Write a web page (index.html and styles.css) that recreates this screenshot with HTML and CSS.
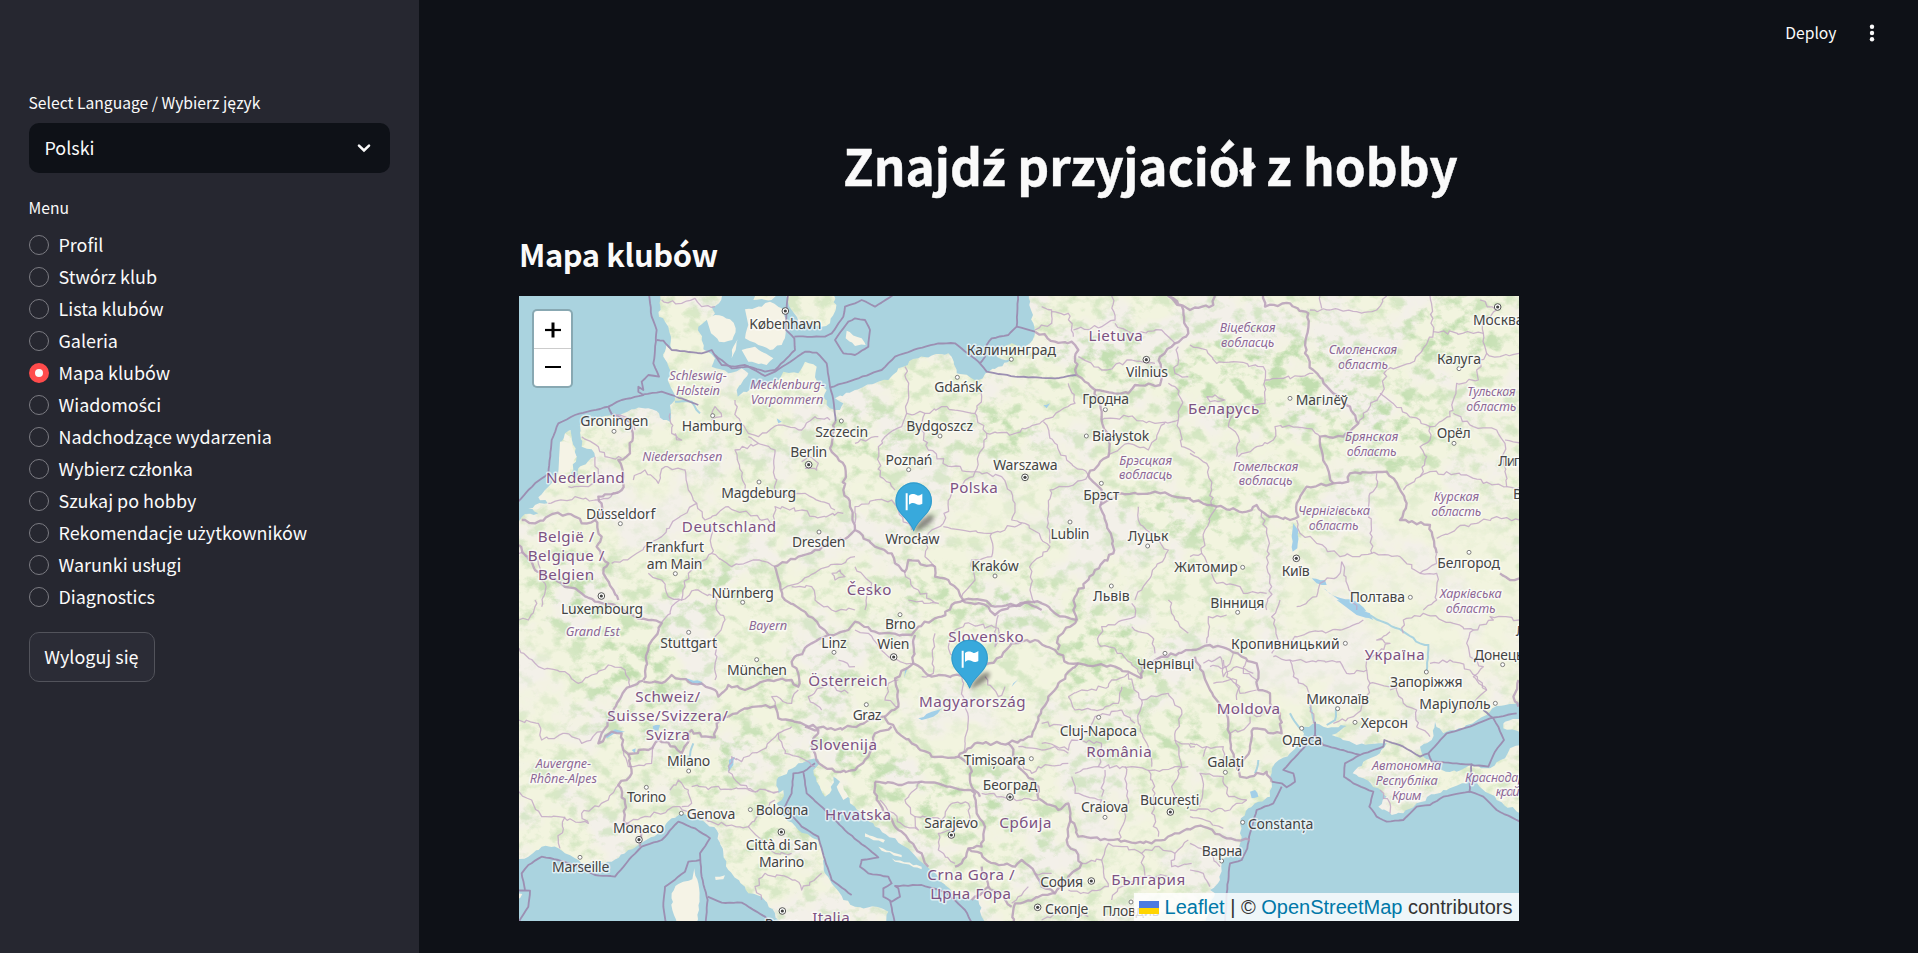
FILE: index.html
```html
<!DOCTYPE html>
<html lang="pl">
<head>
<meta charset="utf-8">
<title>Znajdź przyjaciół z hobby</title>
<link rel="stylesheet" href="styles.css">
</head>
<body>
<div class="app">
  <aside class="sidebar">
    <div class="field-label">Select Language / Wybierz język</div>
    <div class="select"><span>Polski</span>
      <svg width="14" height="10" viewBox="0 0 14 10"><path d="M2 2.6 L7 7.4 L12 2.6" fill="none" stroke="#fafafa" stroke-width="2.6" stroke-linecap="round"/></svg>
    </div>
    <div class="field-label menu-label">Menu</div>
    <div class="radios">
      <label class="radio"><i></i><span>Profil</span></label>
      <label class="radio"><i></i><span>Stwórz klub</span></label>
      <label class="radio"><i></i><span>Lista klubów</span></label>
      <label class="radio"><i></i><span>Galeria</span></label>
      <label class="radio on"><i></i><span>Mapa klubów</span></label>
      <label class="radio"><i></i><span>Wiadomo<b class="ext">ś</b>ci</span></label>
      <label class="radio"><i></i><span>Nadchodzące wydarzenia</span></label>
      <label class="radio"><i></i><span>Wybierz członka</span></label>
      <label class="radio"><i></i><span>Szukaj po hobby</span></label>
      <label class="radio"><i></i><span>Rekomendacje u<b class="ext">ż</b>ytkowników</span></label>
      <label class="radio"><i></i><span>Warunki usługi</span></label>
      <label class="radio"><i></i><span>Diagnostics</span></label>
    </div>
    <button class="logout">Wyloguj się</button>
  </aside>
  <main class="main">
    <header class="toolbar">
      <span>Deploy</span>
      <svg width="6" height="18" viewBox="0 0 6 18" fill="#fafafa"><circle cx="3" cy="2.8" r="2.2"/><circle cx="3" cy="9" r="2.2"/><circle cx="3" cy="15.2" r="2.2"/></svg>
    </header>
    <h1>Znajd<b class="ext">ź</b> przyjaciół z hobby</h1>
    <h2>Mapa klubów</h2>
    <div class="map">
      <svg id="tiles" width="1000" height="625" viewBox="0 0 3000 1875">
        <defs>
          <filter id="wood" x="0" y="0" width="100%" height="100%" color-interpolation-filters="sRGB">
            <feTurbulence type="fractalNoise" baseFrequency="0.02 0.025" numOctaves="6" seed="7"/>
            <feColorMatrix values="0 0 0 0 .76  0 0 0 0 .87  0 0 0 0 .69  4.5 0 0 0 -2.15"/>
          </filter>
          <filter id="field" x="0" y="0" width="100%" height="100%" color-interpolation-filters="sRGB">
            <feTurbulence type="fractalNoise" baseFrequency="0.005" numOctaves="5" seed="21"/>
            <feColorMatrix values="0 0 0 0 .95  0 0 0 0 .955  0 0 0 0 .875  0 6 0 0 -2.2"/>
          </filter>
          <filter id="soft" x="-50%" y="-50%" width="200%" height="200%"><feGaussianBlur stdDeviation="45"/></filter>
          <filter id="shade" x="-50%" y="-50%" width="200%" height="200%"><feGaussianBlur stdDeviation="7"/></filter>
          <mask id="woodMask" maskUnits="userSpaceOnUse" x="0" y="0" width="3000" height="1875"><rect width="3000" height="1875" fill="#888"/><g id="dense" fill="#fff" filter="url(#soft)"></g><g id="sparse" fill="#2c2c2c" filter="url(#soft)"></g></mask>
        </defs>
        <rect width="3000" height="1875" fill="#f3f0e9"/>
        <rect width="3000" height="1875" filter="url(#field)"/>
        <g mask="url(#woodMask)"><rect width="3000" height="1875" filter="url(#wood)"/></g>
        <g id="water"></g><g id="lines"></g><g id="labels"></g>
        <g id="pins"></g>
      </svg>
      <div class="zoom">
        <span><svg width="16" height="16" viewBox="0 0 16 16"><path d="M0 8H16" stroke="#000" stroke-width="2.2"/><path d="M8 0.5V15.5" stroke="#000" stroke-width="3"/></svg></span>
        <span><svg width="16" height="16" viewBox="0 0 16 16"><path d="M0 7H16" stroke="#000" stroke-width="2"/></svg></span>
      </div>
      <div class="attribution">
        <svg width="20" height="13" viewBox="0 0 20 13"><path fill="#4c7be1" d="M0 0h20v7H0z"/><path fill="#ffd500" d="M0 7h20v6H0z"/></svg><span><a>Leaflet</a> | © <a>OpenStreetMap</a> contributors</span>
      </div>
    </div>
  </main>
</div>
<script src="map.js"></script>
</body>
</html>
```
FILE: styles.css
```css
* { box-sizing: border-box; }
body {
  margin: 0;
  background: #0e1117;
  color: #fafafa;
  font-family: "Noto Sans CJK SC", "Noto Sans", sans-serif;
  font-size: 17.93px;
}
.ext { font-family: "Noto Sans", sans-serif; font-weight: inherit; font-size: .98em; line-height: 1; }
.app { display: flex; height: 953px; overflow: hidden; }
.sidebar {
  width: 419px;
  flex: none;
  background: #262730;
  padding: 88px 29px 0;
}
.field-label { font-size: 15.68px; line-height: 30px; height: 30px; text-indent: -.5px; }
.select {
  margin-top: 5px;
  height: 50px;
  border-radius: 10px;
  background: #0e1117;
  display: flex;
  align-items: center;
  justify-content: space-between;
  padding: 0 19px 0 15.5px;
}
.select span { line-height: 30px; padding-bottom: 2px; }
.menu-label { margin-top: 20px; }
.radios { margin-top: 6px; display: flex; flex-direction: column; }
.radio { display: flex; align-items: center; gap: 9.5px; height: 32px; white-space: nowrap; }
.radio span { line-height: 28px; padding-bottom: 2px; }
.radio i {
  width: 20px;
  height: 20px;
  border-radius: 50%;
  border: 1px solid #7b7b82;
  flex: none;
}
.radio.on i { border: 6.5px solid #ff4b4b; background: #fafafa; }
.logout {
  display: block;
  margin-top: 19px;
  width: 126px;
  height: 50px;
  padding: 0 1px 2px 0;
  border: 1px solid #52535b;
  border-radius: 10px;
  background: #2b2c36;
  color: inherit;
  font: inherit;
}
.main { flex: 1; padding-left: 100px; }
.toolbar {
  height: 66px;
  display: flex;
  justify-content: flex-end;
  align-items: center;
  gap: 32px;
  padding-right: 43.5px;
  font-size: 15.7px;
}
.toolbar span { line-height: 24px; }
h1 {
  margin: 61px 136px 0 0;
  height: 74px;
  line-height: 74px;
  font-size: 49.6px;
  font-weight: 700;
  text-align: center;
  -webkit-text-stroke: .4px #fafafa;
}
h2 {
  margin: 28px 0 0;
  height: 50px;
  line-height: 50px;
  font-size: 30.9px;
  font-weight: 700;
  letter-spacing: -.4px;
}
.map { position: relative; width: 1000px; height: 625px; margin-top: 17px; overflow: hidden; }
.map svg { display: block; }
.zoom {
  position: absolute;
  left: 13px;
  top: 13px;
  width: 41px;
  border: 2px solid rgba(0, 0, 0, .2);
  border-radius: 5px;
  background: #fff;
  background-clip: padding-box;
}
.zoom span { display: flex; height: 37px; align-items: center; justify-content: center; }
.zoom span:first-child { height: 38px; border-bottom: 1px solid #ccc; }
.attribution {
  position: absolute;
  right: 0;
  bottom: 0;
  height: 28px;
  padding: 0 6.5px 0 5.5px;
  display: flex;
  align-items: center;
  gap: 5.5px;
  background: rgba(255, 255, 255, .8);
  color: #333;
  font: 20px/28px "Liberation Sans", Arial, sans-serif;
  white-space: nowrap;
}
.attribution a { color: #0078a8; }
#labels text {
  font-family: "Noto Sans", sans-serif;
  text-anchor: middle;
  paint-order: stroke;
  stroke: rgba(255, 255, 255, .65);
  stroke-width: 9px;
  stroke-linejoin: round;
}
#labels .city { font-size: 42px; fill: #444; }
#labels .country { font-size: 45.5px; fill: #7d5283; }
#labels .region { font-size: 38.5px; font-style: italic; fill: #8d6896; }
```
FILE: map.js
```javascript
// Sheet origins in map units (3 units per pixel).
const S = { a: [-12, -18], b: [1008, -18], c: [2013, -18], d: [-12, 912], e: [1008, 912], f: [2013, 912] };
const NS = 'http://www.w3.org/2000/svg';
const $ = id => document.getElementById(id);
let seed = 11;
const rnd = () => ((seed = (seed * 16807) % 2147483647) / 2147483647) - 0.5;
function el(parent, tag, attrs, text) {
  const n = document.createElementNS(NS, tag);
  for (const k in attrs) n.setAttribute(k, attrs[k]);
  if (text) n.textContent = text;
  parent.appendChild(n);
  return n;
}
// "a 1,2 3,4 b 5,6": points, with sheet letters switching the origin.
function parse(s) {
  let o = S.a; const out = [];
  for (const t of s.trim().split(/\s+/)) {
    if (S[t]) { o = S[t]; continue; }
    const [x, y] = t.split(',').map(Number);
    out.push([x + o[0], y + o[1]]);
  }
  return out;
}
function rough(p, k) {
  if (!k) return p;
  const out = [p[0]];
  for (let i = 1; i < p.length; i++) {
    const [x0, y0] = p[i - 1], [x1, y1] = p[i];
    const L = Math.hypot(x1 - x0, y1 - y0), n = Math.max(1, Math.round(L / 13));
    for (let j = 1; j < n; j++) out.push([x0 + (x1 - x0) * j / n + rnd() * k, y0 + (y1 - y0) * j / n + rnd() * k]);
    out.push(p[i]);
  }
  return out;
}
const path = (p, close) => 'M' + p.map(q => q[0].toFixed(1) + ' ' + q[1].toFixed(1)).join('L') + (close ? 'Z' : '');

const dense = [[350,1150,150,180],[800,1400,330,110],[850,1150,200,60],[1200,900,160,50],[1450,920,260,60],[1780,1100,160,150],[1950,1330,260,60],[2100,650,260,90],[2250,250,330,160],[2600,400,180,150],[1300,1500,220,130],[780,1580,90,90],[1650,1620,120,130],[1450,400,160,80],[2800,120,160,120],[550,880,170,70],[1050,420,140,90],[1750,200,220,90],[2060,640,100,80],[170,880,120,150]];
const sparse = [[2750,1000,330,230],[2300,1150,260,120],[1350,1300,130,90],[760,1450,110,40],[350,640,250,110],[2480,900,180,130],[1750,1620,160,80],[2050,1620,160,60],[640,200,150,90],[60,1150,60,150],[2750,720,220,130],[1400,650,200,60]];
dense.forEach(e => el($('dense'), 'ellipse', { cx: e[0], cy: e[1], rx: e[2], ry: e[3] }));
sparse.forEach(e => el($('sparse'), 'ellipse', { cx: e[0], cy: e[1], rx: e[2], ry: e[3] }));

const sea = [
  'a 0,0 430,0 437,60 432,80 450,95 460,110 468,140 470,180 455,165 445,200 465,240 458,270 480,330 465,345 465,395 445,390 432,370 400,355 350,358 300,380 270,378 200,398 195,405 150,430 135,480 130,550 100,590 70,622 98,640 60,645 40,655 70,670 30,672 15,690 0,700',
  'a 195,405 200,470 230,478 240,500 218,515 190,535 185,568 168,550 185,500 170,440 165,410',
  'a 620,0 612,40 590,50 600,70 575,90 550,110 560,150 565,178 600,205 590,230 640,250 680,235 700,250 665,300 668,320 720,292 790,270 805,245 850,250 870,215 905,230 900,262 935,300 925,325 945,355 975,360 985,340 960,325 1020,300 b 60,280 100,270 130,235 190,205 280,190 290,200 305,250 345,262 370,270 400,245 430,230 470,208 440,208 425,200 430,180 470,160 500,175 525,160 540,125 535,100 528,60 518,0 b -70,0 a 955,0 962,60 945,100 920,110 850,95 830,60 815,20 800,0 770,30 715,30 720,0',
  'd 0,780 40,770 80,740 130,745 150,760 190,780 200,790 290,785 340,750 370,735 430,700 470,655 500,640 560,660 605,690 625,760 640,810 690,860 700,880 740,890 780,940 800,985 0,985',
  'd 910,478 880,480 850,490 820,510 785,540 790,580 805,570 800,600 785,610 800,640 850,690 910,720 925,760 930,820 985,900 1020,920 e 80,925 100,935 95,985 390,985 370,900 300,890 250,830 150,740 60,680 0,620 d 1005,610 975,545 955,530 950,570 930,590 905,545 895,510 912,492',
  'f 1000,308 920,318 890,345 820,385 760,400 735,365 725,420 690,440 700,470 720,480 740,510 800,515 840,495 900,505 945,475 960,445 1000,430 1000,400 940,385 945,365 1000,355',
  'f 330,385 375,370 400,380 470,378 425,405 500,435 590,430 570,460 520,485 488,520 520,535 565,565 590,590 565,620 605,645 640,640 680,610 760,570 830,550 835,520 845,520 880,570 920,600 1000,645 1000,985 40,985 75,880 60,870 90,840 95,780 145,750 155,710 150,670 175,625 205,605 240,590 245,520 255,490 300,460 330,430 342,400'
];
sea.forEach(s => el($('water'), 'path', { d: path(rough(parse(s), 9), 1), fill: '#aad3df' }));
const land = [
  'a 575,88 600,75 645,88 662,115 652,150 612,155 588,130', 'a 690,58 740,50 765,35 800,55 818,90 812,130 800,165 765,180 730,165 690,145 700,105',
  'a 680,180 720,170 775,205 755,225 700,215', 'a 668,148 662,180 650,205 655,170', 'a 995,122 1040,145 1052,165 1020,168 992,145',
  'd 538,805 550,850 552,930 545,985 490,985 472,930 470,880 490,852 532,838', 'd 600,830 630,826 625,838 602,840', 'd 975,545 1000,590 985,600 965,560',
  'e 30,700 90,720 85,728 30,710', 'e 70,740 140,765 140,772 80,752', 'e 110,775 200,800 200,808 120,785', 'a 150,430 165,440 160,455 145,450', 'd 0,880 22,882 15,895 0,895', 'a 455,165 470,190 455,215 447,200', 'a 135,455 170,460 185,500 165,545 130,550'
];
land.forEach(s => el($('water'), 'path', { d: path(rough(parse(s), 7), 1), fill: '#f5f3e6' }));
const lakes = ['c 310,700 325,720 322,775 308,785 305,740', 'c 365,865 405,870 410,885 380,880', 'c 400,895 440,920 500,935 530,965 480,955', 'f 440,0 480,5 540,40 550,60 500,45', 'e 190,355 230,335 270,322 235,350 200,360', 'd 268,405 300,388 330,395 300,400 275,415', 'd 640,515 642,480 660,470 655,495', 'd 413,378 435,375 430,392 415,390', 'd 510,235 560,245 565,255 530,250', 'b 565,345 585,340 575,355', 'e 150,210 158,205 148,235', 'a 785,385 800,395 790,400', 'd 350,450 362,445 360,460', 'f 180,575 195,570 205,590 185,595', 'e 470,260 490,238 475,250'];
lakes.forEach(s => el($('water'), 'path', { d: path(rough(parse(s), 5), 1), fill: '#a2cfe8' }));
['f 540,45 640,95 690,130 715,135 710,215', 'f 440,320 435,360 410,375', 'f 360,320 375,370', 'a 480,335 530,335 555,370', 'd 520,480 535,430', 'f 300,340 330,385', 'f 205,480 195,520'].forEach(s => el($('water'), 'path', { d: path(rough(parse(s), 5)), fill: 'none', stroke: '#aad3df', 'stroke-width': 6 }));

const maritime = [
  'a 400,0 410,80 425,120 420,180 415,220 432,260 400,255 380,275 385,300 370,290 370,305 385,315 320,330 280,350 180,375 130,400 110,450 100,550 60,580 0,645', 'a 280,350 290,372 355,400', 'a 385,313 440,305 480,318 550,345',
  'a 425,150 445,152 470,180 560,190 590,180 620,225 660,230 690,225 750,245 780,240 840,180 838,145 812,118 815,60 820,0', 'a 600,195 650,235 700,230 750,258 780,245 870,185 905,188 935,220 945,290 955,330 962,395', 'a 945,292 1020,268 b 80,240 120,200 190,175 250,160 300,160 370,215 395,245 480,260 600,265 665,255',
  'a 838,140 930,140 950,130 985,80 990,50 1020,40 b 20,30 60,50 110,18 130,0', 'a 985,115 960,150 985,190 1020,195 b 40,170 45,120 30,90 0,85 a 1000,95 985,115', 'b 490,0 485,110 460,135 410,145 395,165 390,200 375,220', 'b 485,110 540,125',
  'd 0,870 45,872 40,920 12,965', 'd 30,870 20,820 40,795 80,770 130,780 190,800 240,825 300,830 350,770 380,740 440,720 490,665 540,685 585,715 555,760 560,830 578,900 570,985', 'd 555,780 520,785 510,815 450,860 445,920 455,985', 'd 578,890 620,908 680,908 750,950 780,985',
  'd 900,490 865,515 875,580 930,630 1000,700 e 70,772 20,780 15,800 40,820 100,830 110,850 85,865 85,890 110,905 135,890 130,865 120,858 200,855 270,875 330,930 360,985', 'e 105,900 122,985', 'd 865,515 835,520 830,580 810,620 860,680 910,710 930,780 950,840 1010,885',
  'f 375,365 375,405 400,435 510,465 580,440 583,420 640,440 690,470 715,460 770,400 840,380 900,355 980,340', 'f 510,465 465,490 462,530 490,550 550,575 538,620 560,650 590,665 640,660 680,620 720,615 760,590 840,575 880,590 920,630 1000,670', 'f 838,578 845,490', 'f 715,460 725,485 800,490 895,500 915,455 942,420 925,380 910,355 880,330', 'f 375,405 340,445 280,510 310,520 315,545 290,562 275,550 245,545', 'f 275,560 250,610 200,630 180,700 172,745 155,780 120,790 110,880 105,985'
];
const borders = [
  'a 355,400 345,490 310,510 325,550 320,600 250,620 260,670 240,690 260,740 245,770 280,820 265,850 295,900 310,930', 'a 20,690 60,700 120,670 180,680 200,700 240,690', 'a 12,765 60,840 140,880 200,910 240,935 300,945 d 360,50 440,70 400,150 385,240',
  'd 385,242 330,270 260,400 250,430 290,395 320,400 325,450 340,462 400,450 430,420 480,440 500,460 530,390 560,410 600,412 605,370 640,350', 'd 385,245 450,245 470,225 520,245 560,250 600,270 610,290 640,255 690,270 760,240 830,240 850,260 850,220 830,185 890,130 940,105 900,60 860,30 810,0 a 780,830 850,800 900,780 1000,740 1020,720',
  'd 640,350 690,325 780,318 790,355 870,375 960,390 1010,380 e 90,350', 'd 340,462 350,520 310,555 330,610 330,670 380,690 375,740', 'a 962,395 945,475 990,530 985,600 1010,660 1020,720 b 60,770 110,790 120,820 150,845 160,810 240,830 240,860 280,870 310,900 325,930 380,930 420,950 520,940 560,960', 'e 320,0 400,20 420,45 440,30 520,5 560,10 600,40 665,60 610,110 608,150',
  'd 940,105 1000,90 e 0,65 60,95 110,100 170,105 190,80 260,50 290,15 325,0', 'e 180,105 175,190 230,230 320,228 400,190 440,170 470,130 540,120 600,150 640,190 670,190', 'e 175,190 120,235 130,320 90,350 100,370 170,430 230,470 310,470 360,430 460,430 530,410 550,350 580,290 610,250 670,190 780,200 820,215 860,235', 'e 860,235 860,200 920,170 1010,150 f 60,135 120,150 200,190 205,270 240,280 240,310 270,340 275,400 190,385 180,450 140,510',
  'f 15,170 60,270 110,340 120,420 140,500 150,530 180,530 230,515 245,545', 'b 665,255 720,300 740,380 760,450 760,500 700,555 740,600 735,650 770,740 775,790 720,840 660,920 655,960 e 665,60', 'b 735,645 800,610 900,605 1005,625 c 0,628 80,650 170,665 200,645 230,675 300,690 325,680 320,640 350,590 430,580 475,575 480,550 590,545 625,590 650,640 630,690 720,705 740,790', 'c 930,850 960,870 1000,865',
  'c 430,580 405,520 390,440 460,440 505,400 480,350 430,310 370,240 345,190 355,70 300,40 225,50 220,0', 'c 75,18 70,45 0,60 b 940,18 985,60 1000,130 950,170 915,200 915,285 840,285 820,310 720,300', 'b 665,255 660,200 670,180 650,155 600,155 540,125',
  'e 460,430 500,510 550,560 550,595 610,630 640,610 645,650 670,710 760,720 890,730 960,700 1020,680 f 40,680 110,715 180,720', 'e 645,650 635,720 680,790 640,830 600,880 480,910 470,985', 'e 60,545 130,555 200,545 340,570 360,580 365,640 390,680 380,740 340,745 320,790 300,800', 'e 60,545 65,600 130,690 200,760 220,800', 'e 310,470 345,500 350,560 375,590', 'e 340,745 420,790 480,800 500,780 540,820 560,860 600,880', 'e 380,800 400,860 360,890 350,900', 'd 870,380 910,390 890,440 912,490 960,515 1020,510 e 40,470 60,400 110,380', 'f 985,320 970,290 985,240', 'e 400,860 430,880 470,920'
];
const thin = [
  'a 440,30 500,40 540,25 560,50 600,50', 'a 465,370 470,430 500,450 480,430', 'a 660,330 665,380 700,430 730,440 790,405 860,420 900,380 945,390', 'a 700,440 730,460 660,480 680,560 690,600 640,600', 'a 730,460 780,480 780,600 820,620 870,610 960,660', 'a 355,570 390,540 430,580 450,530 510,540 520,600 545,640 480,690 440,740 400,760 350,800 290,820', 'a 545,640 570,690 640,650 700,670 780,700 780,650 860,660 900,680 985,670', 'a 590,700 590,790 650,830 720,810 780,830', 'a 590,790 520,850 500,930 540,900 600,920 d 605,30 630,60 600,110 600,240', 'a 400,850 440,870 460,920 500,930 d 480,10 440,70',
  'a 200,440 250,470 270,500 320,505', 'a 160,590 220,590 250,560 240,500', 'a 100,640 180,620 240,630 310,610', 'a 12,790 60,800 90,880 80,950', 'a 300,375 350,390 360,420', 'a 590,380 600,350 620,380 590,390', 'a 860,515 880,500 910,520 905,540 870,535',
  'd 0,60 40,60 60,20 60,0', 'd 12,145 70,200 150,215 190,250 230,225 280,195 330,210 345,260', 'd 12,360 70,370 80,420 150,400 200,430 260,395', 'd 12,575 50,600 80,650 130,650 220,670 200,640 280,600 310,555', 'd 150,650 130,720 135,745', 'd 325,450 340,500 410,490 415,440', 'd 465,570 490,540 520,570 530,610 500,620', 'd 640,515 650,470 680,485 740,450 770,420 830,380', 'd 640,515 700,570 790,575 530,560', 'd 330,670 400,650 480,620 530,640 600,670 700,680 740,640 780,600', 'd 790,400 810,460 870,480 900,500', 'd 700,680 740,720 780,760 830,760', 'd 740,900 720,860 750,820 840,840 860,870 920,820', 'd 780,320 770,290 830,310 850,270', 'd 920,330 880,290 930,250 1000,280', 'd 970,180 1020,200', 'a 800,900 880,860 940,830 1020,800',
  'a 1020,960 950,960 900,930 890,890 830,890', 'a 950,850 975,840 990,860 960,870 950,850',
  'b 150,230 160,290 155,370 140,410 90,440 70,470 75,560 120,600', 'b 155,370 210,370 260,350 360,370 380,320 375,300', 'b 210,370 195,410 220,480 290,530 360,545 380,480 395,430 360,370', 'b 395,430 480,430 560,395 660,340 640,280', 'b 565,395 600,460 635,510 700,555', 'b 360,545 440,560 480,640 470,690 510,700', 'b 360,545 290,610 265,700 220,730', 'b 585,760 580,700 585,600 640,590 700,555', 'b 510,700 585,770 530,820 525,900 540,940', 'b 265,710 410,730 500,700', 'b 410,730 410,800 350,810 360,870 320,920', 'b 0,700 0,650 60,630 110,630 130,660 170,720', 'b 220,730 210,800 240,830', 'b 0,460 70,440', 'b 140,840 190,900 250,940 160,930', 'b 0,830 50,880 30,960', 'b 560,50 590,60 590,100 540,120', 'b 590,65 640,70 655,140', 'b 655,120 740,110 780,90 770,18', 'b 780,100 830,130 920,120 960,160', 'b 670,200 740,240 830,210 900,220', 'b 740,390 820,380 900,400 970,390 980,330 960,290 940,280', 'b 760,500 820,460 880,480 930,400', 'b 970,390 980,470 1020,490', 'b 850,650 850,690 940,780 860,900 840,930', 'b 970,170 960,250 1000,260',
  'c 0,165 50,180 80,220 130,215 220,230 225,270 280,265 370,250', 'c 225,270 225,340 130,370 115,410 145,440 140,500', 'c 145,500 200,470 250,450 255,410 350,415 390,440', 'c 0,490 50,520 65,600 65,650', 'c 360,60 420,60 500,65 560,60 590,18', 'c 390,18 395,55', 'c 720,18 730,125 690,190 660,220 590,240 575,310 520,370 505,400', 'c 730,125 850,130 880,130 890,190 860,240 865,270 800,280 790,330 780,380 720,410 650,370 570,310', 'c 890,190 930,200 987,190', 'c 790,370 850,410 920,420 945,460 940,510 950,590 880,580 830,555 720,545 690,560', 'c 720,410 720,450 690,470 710,500 690,560 640,600', 'c 945,450 1000,460', 'c 950,590 1000,600', 'c 560,550 560,590 540,610 540,730 545,790 450,800 380,760 330,730 320,690', 'c 80,650 45,720 35,790 0,800', 'c 215,665 235,770 230,830 245,890 230,960', 'c 35,790 80,880 150,890 160,910 230,910', 'c 455,815 450,850 390,880 380,920 320,950', 'c 455,815 500,960', 'c 545,790 630,800 690,850 740,850 740,930 700,960', 'c 740,745 800,715 860,700 920,680 987,690', 'c 690,850 740,820 740,790', 'c 870,30 920,60 880,90 880,130', 'c 50,320 75,315 105,330 60,335 50,320',
  'f 50,130 55,50 110,45', 'f 245,160 270,130 245,50 270,0', 'f 270,130 350,100 450,90 520,60', 'f 250,170 300,180 450,185 470,220 530,210 530,180 600,130 560,120 600,95', 'f 300,180 310,230 350,260 370,370', 'f 530,210 540,250 620,260 640,310 680,330 680,380 720,410', 'f 430,370 490,350 530,310 540,250', 'f 640,100 640,60 700,40 790,70 850,90 830,130 840,170 880,200 850,230 890,270 850,310 790,330', 'f 720,190 780,180 840,210 890,270', 'f 850,90 910,60 900,50 987,60', 'f 600,270 620,260', 'f 40,470 50,440 100,440 100,500', 'f 30,620 40,560 30,520 100,530 110,580 170,600', 'f 0,630 120,630 140,610 170,600', 'f 0,650 60,665 100,685', 'f 0,430 50,440', 'f 40,190 90,170 100,230 140,200 190,220', 'f 70,250 140,240 150,280 200,270', 'f 110,340 160,330 200,350 240,320', 'f 120,400 170,380 180,350', 'f 100,180 110,230 150,260 140,300', 'f 60,200 110,200 130,160', 'f 200,240 160,220 170,180', 'f 570,570 600,610 600,640', 'f 0,730 60,760 90,800', 'f 0,810 40,820 60,860',
  'e 240,100 235,220 200,230', 'e 300,90 330,70 430,85 420,140 430,45', 'e 300,90 280,140 330,225', 'e 320,228 325,290 340,350 325,460', 'e 390,230 430,290 450,260', 'e 0,90 40,100 100,170 170,190', 'e 130,240 100,250 90,300 130,320', 'e 640,290 680,270 760,260 770,240 820,220', 'e 640,290 660,330 720,330 790,310 800,260', 'e 560,370 640,380 700,400 720,350 800,330', 'e 560,430 640,450 650,420 740,430', 'e 660,520 730,500 830,500 900,510 960,500 1000,500', 'e 650,530 660,580 740,600 720,640', 'e 750,510 740,590', 'e 810,500 820,600 790,720', 'e 880,510 900,580 890,640 910,710', 'e 960,420 980,500 950,560 970,620', 'e 820,220 860,300 850,370 880,440 890,500', 'e 860,300 940,280 980,330 960,420 1020,440', 'e 800,330 840,370', 'e 740,430 730,500', 'e 490,440 560,450 600,440 640,460', 'e 490,490 530,520 550,500 640,490', 'e 200,545 150,600 180,650 260,660 290,610', 'e 290,610 340,610 350,670 250,700 250,750 300,790', 'e 180,650 190,690 150,680 75,600', 'e 550,600 500,600 440,590 380,580', 'e 680,790 740,780 760,730 800,740 860,760 900,740 960,760 1000,720', 'e 740,780 760,860 700,880 640,870', 'e 860,760 870,830 800,860 770,900', 'e 960,760 950,800 1010,790', 'e 870,830 940,830', 'e 730,130 740,80 840,50 830,10', 'e 730,130 800,160 860,230', 'e 830,80 890,110 900,160', 'e 940,0 960,60 1000,100', 'e 470,910 520,860', 'e 540,820 590,820', 'e 560,960 620,930 700,950'
];
maritime.forEach(s => el($('lines'), 'path', { d: path(rough(parse(s), 2)), fill: 'none', stroke: '#9c8fb2', 'stroke-width': 5.5, 'stroke-linejoin': 'round' }));
thin.forEach(s => el($('lines'), 'path', { d: path(rough(parse(s), 12)), fill: 'none', stroke: '#c3a8c6', 'stroke-opacity': .85, 'stroke-width': 3.8, 'stroke-linejoin': 'round' }));
borders.forEach(s => el($('lines'), 'path', { d: path(rough(parse(s), 10)), fill: 'none', stroke: '#b79fb9', 'stroke-opacity': .85, 'stroke-width': 7, 'stroke-linejoin': 'round' }));

// [sheet, centre x, baseline, width, text, class]; entries without a class are cities.
const R = 'region', C = 'country';
const labels = [
  ['a',811,116,216,'København'],['a',549,270,172,'Schleswig-',R],['a',549,315,132,'Holstein',R],['a',817,298,224,'Mecklenburg-',R],['a',816,342,218,'Vorpommern',R],
  ['a',298,409,204,'Groningen'],['a',592,424,183,'Hamburg'],['a',980,440,159,'Szczecin'],['a',881,500,111,'Berlin'],['a',502,514,240,'Niedersachsen',R],['a',211,578,236,'Nederland',C],
  ['a',731,624,224,'Magdeburg'],['a',317,686,208,'Düsseldorf'],['a',642,725,283,'Deutschland',C],['a',153,757,170,'België /',C],['a',153,813,230,'Belgique /',C],['a',153,869,168,'Belgien',C],
  ['a',911,772,160,'Dresden'],['a',479,786,177,'Frankfurt'],['a',479,837,167,'am Main'],['a',683,924,187,'Nürnberg'],
  ['b',469,194,268,'Калининград'],['b',310,307,145,'Gdańsk'],['b',782,154,163,'Lietuva',C],['b',876,262,126,'Vilnius'],['b',752,343,141,'Гродна'],['b',254,424,200,'Bydgoszcz'],['b',797,452,172,'Białystok'],
  ['b',162,524,141,'Poznań'],['b',511,541,193,'Warszawa'],['b',356,608,144,'Polska',C],['b',872,524,158,'Брэсцкая',R],['b',872,568,160,'вобласць',R],['b',739,629,108,'Брэст'],['b',172,762,163,'Wrocław'],['b',645,746,117,'Lublin'],['b',879,752,122,'Луцьк'],
  ['b',420,844,142,'Kraków'],['b',42,914,134,'Česko',C],['b',769,934,110,'Львів'],['c',48,847,190,'Житомир'],
  ['c',173,125,167,'Віцебская',R],['c',173,170,160,'вобласць',R],['c',519,193,205,'Смоленская',R],['c',519,237,150,'область',R],['c',925,104,152,'Москва'],['c',807,222,132,'Калуга'],['c',395,345,156,'Магілёў'],['c',101,371,214,'Беларусь',C],
  ['c',904,318,146,'Тульская',R],['c',904,362,150,'область',R],['c',545,454,160,'Брянская',R],['c',545,499,150,'область',R],['c',791,445,102,'Орёл'],['c',227,542,196,'Гомельская',R],['c',227,586,162,'вобласць',R],['c',990,528,130,'Липецк'],['c',1055,627,172,'Воронеж'],
  ['c',799,633,136,'Курская',R],['c',799,677,150,'область',R],['c',432,674,216,'Чернігівська',R],['c',431,719,150,'область',R],['c',836,835,188,'Белгород'],['c',317,858,84,'Київ'],['c',562,936,166,'Полтава'],['c',842,925,186,'Харківська',R],['c',842,968,150,'область',R],['c',142,953,162,'Вінниця'],
  ['d',261,42,246,'Luxembourg'],['d',233,107,162,'Grand Est',R],['d',521,144,170,'Stuttgart'],['d',759,90,115,'Bayern',R],['d',957,143,76,'Linz'],['d',726,226,180,'München'],['d',999,257,238,'Österreich',C],['d',458,307,195,'Schweiz/',C],['d',458,363,362,'Suisse/Svizzera/',C],['d',458,420,132,'Svizra',C],
  ['d',521,498,130,'Milano'],['d',145,503,166,'Auvergne-',R],['d',145,548,202,'Rhône-Alpes',R],['d',986,450,200,'Slovenija',C],['d',395,605,118,'Torino'],['d',588,656,146,'Genova'],['d',801,646,158,'Bologna'],['d',1029,661,198,'Hrvatska',C],['d',371,698,154,'Monaco'],['d',800,750,216,'Città di San'],['d',800,802,136,'Marino'],['d',197,816,172,'Marseille'],['d',948,970,112,'Italia',C],['d',802,988,106,'Roma'],
  ['e',136,87,92,'Brno'],['e',115,148,96,'Wien'],['e',393,127,226,'Slovensko',C],['e',36,361,86,'Graz'],['e',352,320,320,'Magyarország',C],['e',932,206,172,'Чернівці'],['e',730,407,232,'Cluj-Napoca'],['e',792,472,196,'România',C],['e',419,494,186,'Timișoara'],['e',465,569,163,'Београд'],['e',749,636,142,'Craiova'],['e',944,614,178,'București'],['e',289,684,162,'Sarajevo'],['e',511,684,156,'Србија',C],['e',348,840,262,'Crna Gora /',C],['e',347,896,242,'Црна Гора',C],['e',620,861,128,'София'],['e',880,856,222,'България',C],['e',635,942,130,'Скопје'],['e',828,949,172,'Пловдив'],
  ['f',286,147,326,'Кропивницький'],['f',614,179,180,'Україна',C],['f',937,179,170,'Донецьк'],['f',1052,108,150,'Луганськ'],['f',709,262,218,'Запоріжжя'],['f',175,343,190,'Moldova',C],['f',443,311,188,'Миколаїв'],['f',795,328,214,'Маріуполь'],['f',583,384,142,'Херсон'],['f',336,434,120,'Одеса'],['f',107,502,110,'Galați'],['f',650,511,208,'Автономна',R],['f',650,556,186,'Республіка',R],['f',650,600,88,'Крим',R],['f',953,545,256,'Краснодарский',R],['f',953,589,72,'край',R],['f',272,686,196,'Constanța'],['f',96,767,122,'Варна']
];
const towns = 'a 297,424 593,377 979,393 732,576 316,701 912,726 481,851 683,937 b 469,208 307,262 255,438 161,539 694,438 751,359 739,580 645,696 878,768 420,858 769,888 c 807,236 300,325 792,460 837,787 158,832 661,922 f 143,37 466,130 709,216 938,194 916,310 495,367 443,326 335,385 106,517 158,667 95,783 e 135,44 34,314 930,160 731,352 529,476 750,652 828,906 d 521,97 725,179 957,157 521,513 394,562 499,640 706,629 195,772';
const capitals = 'a 811,63 881,524 b 874,209 510,562 c 923,51 319,805 d 259,-12 372,719 799,696 802,933 e 116,171 465,591 289,705 946,636 709,843 548,922';
parse(towns).forEach(p => el($('labels'), 'circle', { cx: p[0], cy: p[1], r: 6, fill: '#fff', stroke: '#666', 'stroke-width': 2.5 }));
parse(capitals).forEach(p => {
  el($('labels'), 'circle', { cx: p[0], cy: p[1], r: 10, fill: '#fff', stroke: '#555', 'stroke-width': 3 });
  el($('labels'), 'circle', { cx: p[0], cy: p[1], r: 4.8, fill: '#444' });
});
labels.forEach(([s, x, y, w, t, c]) => el($('labels'), 'text', { x: x + S[s][0], y: y + S[s][1], textLength: w, class: c || 'city' }, t));

// Marker pins: tip position in map units.
[[1184, 707], [1352, 1179]].forEach(([x, y]) => {
  const g = el($('pins'), 'g', { transform: `translate(${x} ${y})` });
  el(g, 'path', { d: 'M0 0 C12 -30 35 -52 58 -50 C72 -40 34 -6 0 0Z', fill: '#000', opacity: .42, filter: 'url(#shade)' });
  el(g, 'path', { d: 'M0 0 C-14 -40 -55 -52 -55 -93 A55 55 0 0 1 55 -93 C55 -52 14 -40 0 0Z', fill: '#38a9dc' });
  el(g, 'path', { d: 'M0 -3 C-14 -41 -53 -53 -53 -93 A53 53 0 0 1 53 -93 C53 -53 14 -41 0 -3Z', fill: 'none', stroke: '#2f93c0', 'stroke-width': 2 });
  el(g, 'path', { d: 'M-24 -115 H-18 V-64 H-24Z M-14 -108 C-4 -116 5 -112 10 -109 C15 -107 20 -110 26 -114 V-84 C12 -76 6 -86 -2 -86 C-7 -86 -10 -84 -14 -81Z', fill: '#fff' });
});
```
